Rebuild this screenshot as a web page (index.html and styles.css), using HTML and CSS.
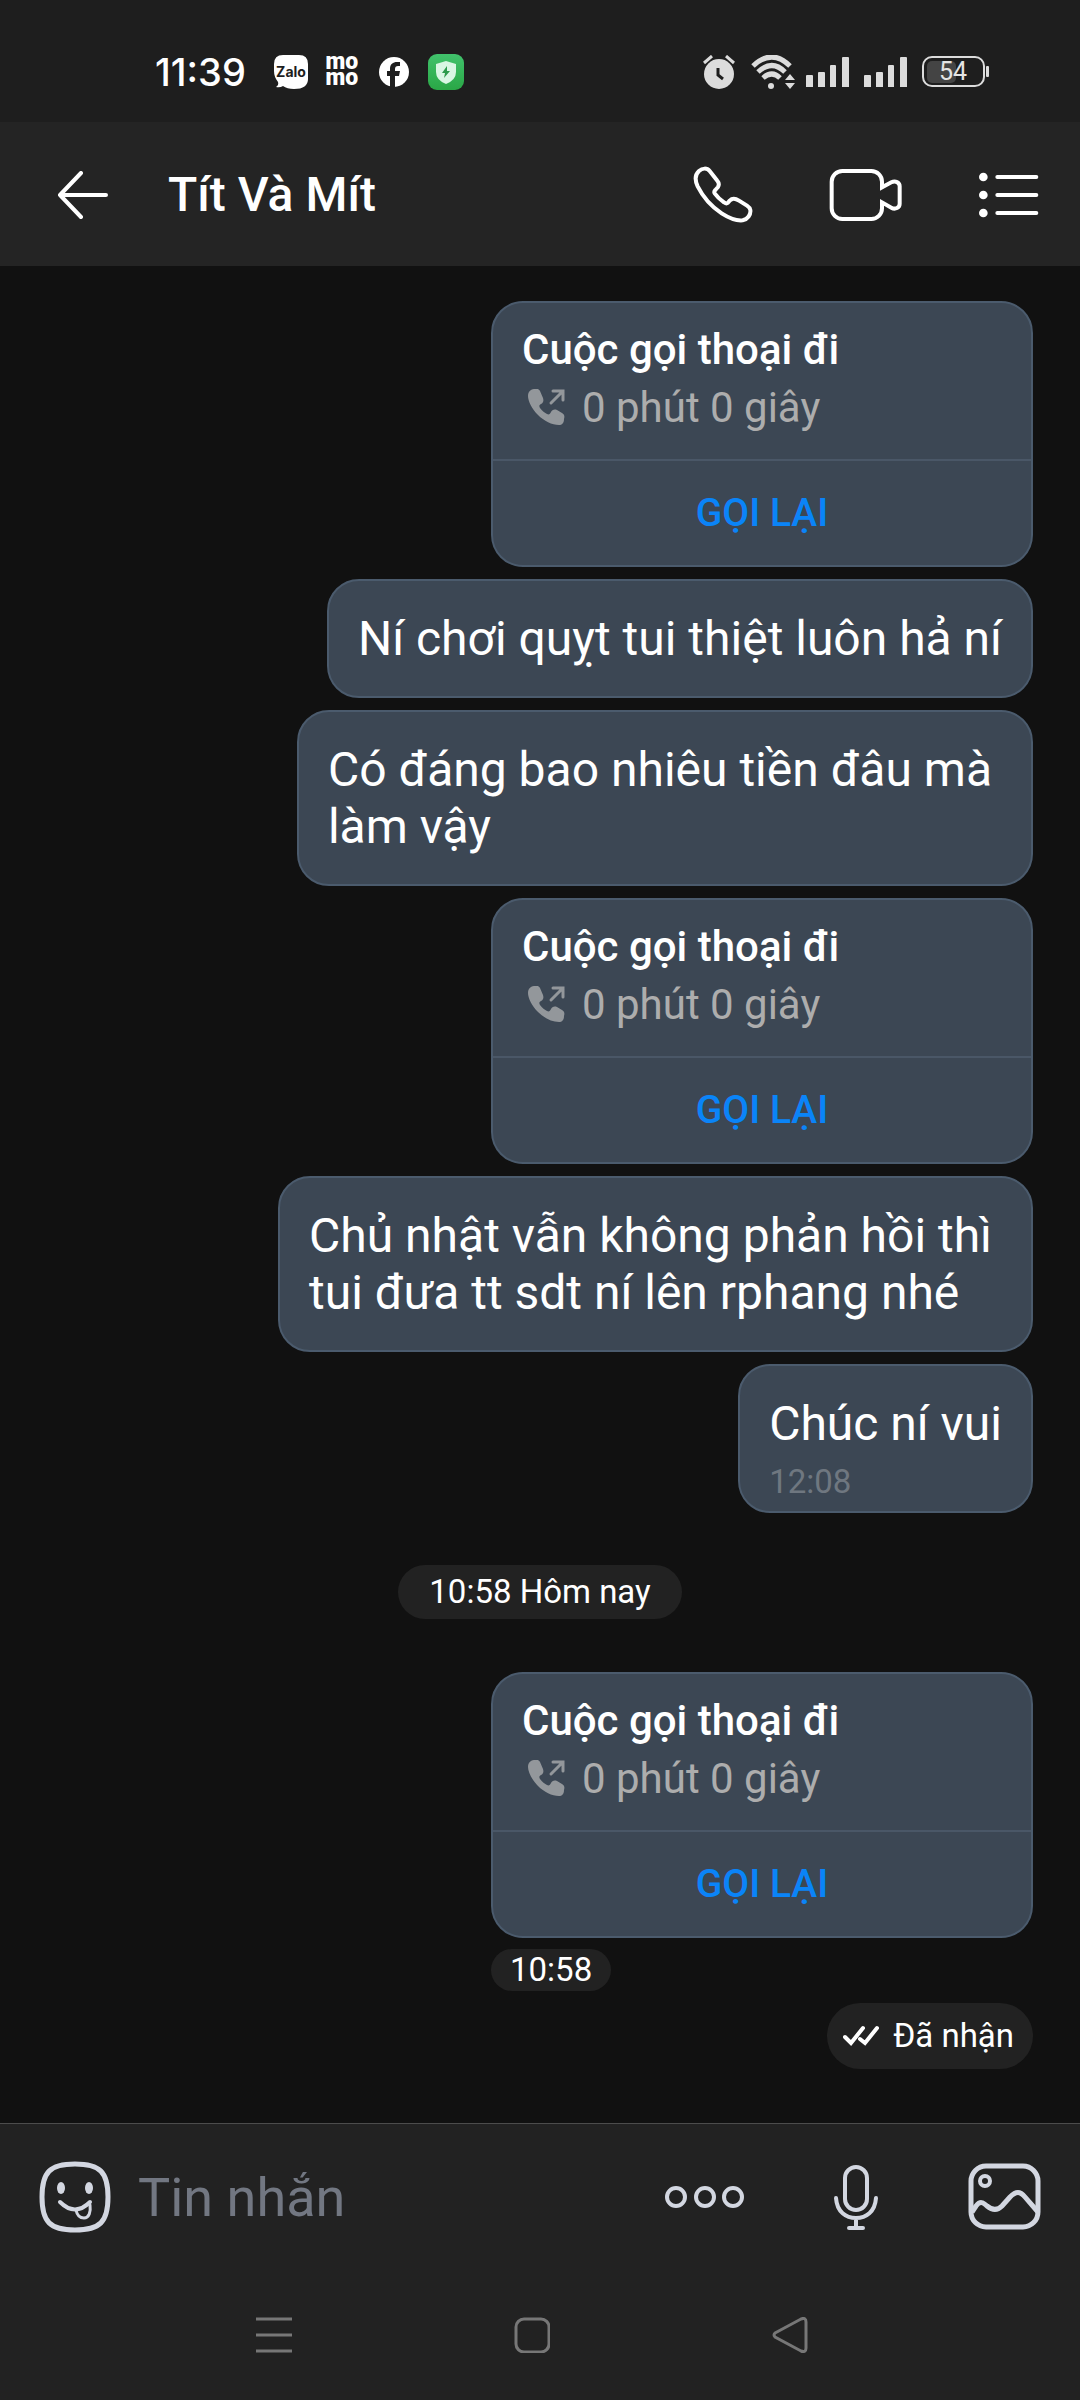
FILE: index.html
```html
<!DOCTYPE html>
<html lang="vi">
<head>
<meta charset="utf-8">
<meta name="viewport" content="width=device-width, initial-scale=1">
<title>Tít Và Mít</title>
<link rel="stylesheet" href="styles.css">
</head>
<body>
<svg class="defs" width="0" height="0" aria-hidden="true">
  <symbol id="call-out" viewBox="0 0 38 38">
    <path fill="currentColor" d="M6 0C9-.5 11 0 12 2L15 9C16 12 15 14 13 15C11 16 11 17 12 19C14 22 17 24 19 25C21 26 22 25 23 23C24 21 26 20 29 21L34 24C36 25 37 27 36 30C36 34 34 36 31 36C24 36 16 32 10 26C4 20 0 12 0 7C0 3 2 .5 6 0Z"/>
    <path fill="none" stroke="currentColor" stroke-width="3" stroke-linecap="round" d="M23 14L34 3M25 2H35V11"/>
  </symbol>
  <symbol id="signal" viewBox="0 0 44 30">
    <path fill="#dcdcdc" d="M1 18h5q1 0 1 1v11H0V19q0-1 1-1zM13 15h5q1 0 1 1v14h-7V16q0-1 1-1zM25 8h4q1 0 1 1v21h-6V9q0-1 1-1zM37 0h5q1 0 1 1v29h-7V1q0-1 1-1z"/>
  </symbol>
</svg>

<div class="status-bar">
  <div class="status-left">
    <time class="clock">11:39</time>
    <svg class="app-zalo" width="34" height="34" viewBox="0 0 34 34">
      <path fill="#fff" d="M9 0H25Q34 0 34 9V24Q34 34 20 34Q13 34 9 31Q6 33 2 32Q5 30 4 27Q0 22 0 16V9Q0 0 9 0Z"/>
      <text class="zalo-text" x="17" y="22" text-anchor="middle">Zalo</text>
    </svg>
    <div class="app-momo">mo<br>mo</div>
    <svg class="app-facebook" width="30" height="30" viewBox="0 0 30 30">
      <circle cx="15" cy="15" r="15" fill="#fff"/>
      <path fill="#1e1e1e" d="M11 30V19H8V14H11V12C11 7 14 5 18 5H21V9H19C17 9 16 10 16 12V14H21L20 19H16V30Z"/>
    </svg>
    <svg width="36" height="36" viewBox="0 0 36 36">
      <defs><linearGradient id="green" x1="0" y1="0" x2="0" y2="1"><stop offset="0" stop-color="#41c26c"/><stop offset="1" stop-color="#2aa746"/></linearGradient></defs>
      <rect width="36" height="36" rx="9" fill="url(#green)"/>
      <path fill="#d9f6e4" d="M18 7L28 10V18Q28 26 18 30Q8 26 8 18V10Z"/>
      <path fill="#2b9a4b" d="M19 12L14 19H17L16 24L22 17H19Z"/>
    </svg>
  </div>
  <div class="status-right">
    <svg class="alarm" width="32" height="34" viewBox="0 0 32 34">
      <circle cx="16" cy="19" r="15" fill="#dcdcdc"/>
      <path fill="none" stroke="#dcdcdc" stroke-width="3" d="M1 8L9 1M31 8L23 1"/>
      <path fill="none" stroke="#1e1e1e" stroke-width="3" d="M15 13V20L20 24"/>
    </svg>
    <svg class="wifi" width="45" height="35" viewBox="0 0 45 35">
      <g fill="none" stroke="#dcdcdc" stroke-width="5"><path d="M2 11Q21-7 39 11"/><path d="M7 17Q21 4 34 17"/><path d="M12 23Q21 15 29 23"/></g>
      <circle cx="20" cy="31" r="3" fill="#dcdcdc"/>
      <path fill="#dcdcdc" d="M39 19L44 25H34ZM39 34L44 28H34Z"/>
    </svg>
    <svg class="signal" width="44" height="30"><use href="#signal"/></svg>
    <svg class="signal" width="44" height="30"><use href="#signal"/></svg>
    <svg width="68" height="32" viewBox="0 0 68 32">
      <rect x="5" y="5" width="29" height="22" rx="5" fill="#444"/>
      <rect x="1" y="1" width="61" height="29" rx="9" fill="none" stroke="#dcdcdc" stroke-width="2"/>
      <rect x="64" y="10" width="3" height="11" rx="1" fill="#dcdcdc"/>
      <text class="battery-text" x="31" y="24" text-anchor="middle">54</text>
    </svg>
  </div>
</div>

<header class="header">
  <button class="icon-button" type="button" aria-label="Quay lại">
    <svg width="52" height="48" viewBox="0 0 52 48" fill="none" stroke="#fff" stroke-width="4" stroke-linecap="round" stroke-linejoin="round"><path d="M25 2L4 24L25 46M4 24H50"/></svg>
  </button>
  <h1 class="contact">Tít Và Mít</h1>
  <div class="header-actions">
    <button class="icon-button" type="button" aria-label="Gọi thoại">
      <svg width="60" height="58" viewBox="154 136 180 174" fill="none" stroke="#fff" stroke-width="12" stroke-linejoin="round"><path d="M204 151C196 141 182 142 172 151C160 162 160 180 168 197C182 225 210 258 240 278C262 292 285 301 303 299C318 296 328 282 326 268C325 262 322 259 316 255L292 240C278 231 271 233 264 240L258 247C254 250 250 247 247 245C236 237 226 228 219 218C216 213 218 211 221 208L229 199C233 192 232 186 227 180Z"/></svg>
    </button>
    <button class="icon-button" type="button" aria-label="Gọi video">
      <svg width="74" height="54" viewBox="565 141 222 162" fill="none" stroke="#fff" stroke-width="12"><path d="M724 199V182A32 32 0 0 0 692 150H605A32 32 0 0 0 573 182V262A32 32 0 0 0 605 294H692A32 32 0 0 0 724 262V244L752 260C764 267 777 260 777 248V196C777 184 764 178 752 184Z"/></svg>
    </button>
    <button class="icon-button" type="button" aria-label="Tùy chọn">
      <svg width="60" height="46" viewBox="1016 153 180 138"><g fill="#fff"><circle cx="1029" cy="168" r="13"/><circle cx="1029" cy="222" r="13"/><circle cx="1029" cy="276" r="13"/></g><path stroke="#fff" stroke-width="12" stroke-linecap="round" d="M1071 168H1188M1071 222H1188M1071 276H1188"/></svg>
    </button>
  </div>
</header>

<main class="chat">
  <article class="bubble call">
    <div class="call-info">
      <h2 class="call-title">Cuộc gọi thoại đi</h2>
      <p class="call-length"><svg class="call-icon" width="38" height="38"><use href="#call-out"/></svg>0 phút 0 giây</p>
    </div>
    <button class="call-back" type="button">GỌI LẠI</button>
  </article>
  <article class="bubble text">Ní chơi quỵt tui thiệt luôn hả ní</article>
  <article class="bubble text multiline">Có đáng bao nhiêu tiền đâu mà<br>làm vậy</article>
  <article class="bubble call">
    <div class="call-info">
      <h2 class="call-title">Cuộc gọi thoại đi</h2>
      <p class="call-length"><svg class="call-icon" width="38" height="38"><use href="#call-out"/></svg>0 phút 0 giây</p>
    </div>
    <button class="call-back" type="button">GỌI LẠI</button>
  </article>
  <article class="bubble text multiline">Chủ nhật vẫn không phản hồi thì<br>tui đưa tt sdt ní lên rphang nhé</article>
  <article class="bubble text timed">Chúc ní vui<time class="bubble-time">12:08</time></article>
  <time class="day">10:58 Hôm nay</time>
  <div class="call-group">
    <article class="bubble call">
      <div class="call-info">
        <h2 class="call-title">Cuộc gọi thoại đi</h2>
        <p class="call-length"><svg class="call-icon" width="38" height="38"><use href="#call-out"/></svg>0 phút 0 giây</p>
      </div>
      <button class="call-back" type="button">GỌI LẠI</button>
    </article>
    <time class="sent-time">10:58</time>
  </div>
  <div class="receipt">
    <svg width="38" height="22" viewBox="0 0 38 22" fill="none" stroke="#fff" stroke-width="4" stroke-linecap="round"><path d="M2 12L8 18L20 3M17 14L22 18L34 3"/></svg>
    <span>Đã nhận</span>
  </div>
</main>

<form class="composer">
  <button class="icon-button" type="button" aria-label="Nhãn dán">
    <svg width="74" height="76" viewBox="0 0 74 76" fill="none" stroke="#d3d7e1" stroke-width="5" stroke-linecap="round">
      <path d="M37 5C62 5 70 13 70 38C70 63 62 71 37 71C12 71 4 63 4 38C4 13 12 5 37 5Z"/>
      <g fill="#d3d7e1" stroke="none"><ellipse cx="23" cy="29" rx="4" ry="6"/><ellipse cx="51" cy="29" rx="4" ry="6"/></g>
      <path stroke-width="4" d="M22 43Q37 58 52 43"/><path stroke-width="3" d="M38 51C39 56 42 59 46 59C51 59 53 53 52 46"/>
    </svg>
  </button>
  <input class="message-input" type="text" placeholder="Tin nhắn" aria-label="Tin nhắn">
  <div class="composer-actions">
    <button class="icon-button" type="button" aria-label="Thêm">
      <svg width="80" height="24" viewBox="0 0 80 24" fill="none" stroke="#d3d7e1" stroke-width="4"><circle cx="11" cy="12" r="9"/><circle cx="40" cy="12" r="9"/><circle cx="68" cy="12" r="9"/></svg>
    </button>
    <button class="icon-button" type="button" aria-label="Ghi âm">
      <svg width="46" height="68" viewBox="0 0 46 68" fill="none" stroke="#d3d7e1" stroke-width="4" stroke-linecap="round"><rect x="12" y="4" width="22" height="43" rx="11"/><path d="M3 35C4 49 13 55 23 55C33 55 42 49 43 35M23 55V65M16 65H30"/></svg>
    </button>
    <button class="icon-button" type="button" aria-label="Gửi ảnh">
      <svg width="76" height="70" viewBox="0 0 76 70" fill="none" stroke="#d3d7e1" stroke-width="5"><rect x="4" y="4" width="67" height="61" rx="15"/><circle cx="18" cy="19" r="5" stroke-width="4"/><path d="M5 50L9 44C13 39 16 40 20 44C26 49 31 48 35 44L43 35C49 29 53 29 58 35L71 50"/></svg>
    </button>
  </div>
</form>

<nav class="system-nav" aria-label="Điều hướng">
  <button class="icon-button" type="button" aria-label="Gần đây"><svg width="36" height="36" viewBox="0 0 36 36" stroke="#777" stroke-width="3"><path d="M0 2H36M0 18H36M0 34H36"/></svg></button>
  <button class="icon-button" type="button" aria-label="Trang chủ"><svg width="36" height="36" viewBox="0 0 36 36" fill="none" stroke="#777" stroke-width="3"><rect x="2" y="2" width="33" height="33" rx="8"/></svg></button>
  <button class="icon-button" type="button" aria-label="Trở về"><svg width="36" height="36" viewBox="0 0 36 36" fill="none" stroke="#777" stroke-width="3"><path d="M3 16L29 2Q34 0 34 5V31Q34 36 29 34L3 20Q1 18 3 16Z"/></svg></button>
</nav>
</body>
</html>
```
FILE: styles.css
```css
* { box-sizing: border-box; }

body {
  margin: 0;
  min-height: 100vh;
  display: flex;
  flex-direction: column;
  background: #111;
  color: #fff;
  font-family: Roboto, "Noto Sans", sans-serif;
}

svg { display: block; flex: none; }
.defs { position: absolute; }
h1, h2, p { margin: 0; }
button, input { font: inherit; color: inherit; border: 0; padding: 0; background: none; }
button { cursor: pointer; }
.icon-button { display: block; flex: none; }

/* Status bar */
.status-bar {
  height: 122px;
  padding: 22px 90px 0 155px;
  display: flex;
  align-items: center;
  justify-content: space-between;
  background: #1e1e1e;
}
.status-left, .status-right { display: flex; align-items: center; }
.clock { font: 500 38px/40px Inter, sans-serif; margin-right: 28px; }
.app-zalo { margin-right: 16px; }
.zalo-text { font: 700 14px Inter, sans-serif; fill: #1e1e1e; }
.app-momo { width: 36px; margin-right: 19px; font-weight: 900; font-size: 23px; line-height: 16px; text-align: center; padding-bottom: 4px; }
.app-facebook { margin-right: 19px; }
.alarm { margin-right: 16px; }
.wifi { margin-right: 10px; }
.signal { margin-right: 14px; }
.battery-text { font: 400 25px Roboto, sans-serif; fill: #e4e4e4; }

/* Conversation header */
.header {
  height: 144px;
  padding: 2px 41px 0 56px;
  display: flex;
  align-items: center;
  background: #242424;
}
.contact { flex: 1; margin-left: 60px; font-size: 48px; line-height: 56px; font-weight: 500; }
.header-actions { display: flex; align-items: center; gap: 76px; }

/* Messages */
.chat {
  flex: 1;
  padding: 35px 47px 54px;
  display: flex;
  flex-direction: column;
  align-items: flex-end;
  gap: 12px;
}
.bubble {
  border: 2px solid #4b5b6d;
  border-radius: 32px;
  background: #3c4754;
}
.text { padding: 29px; font-size: 48px; line-height: 57px; }
.multiline { padding-right: 39px; }
.timed { padding-bottom: 9px; }
.bubble-time { display: block; margin-top: 10px; font-size: 33px; line-height: 40px; color: #6f7780; }

.call { width: 542px; max-width: 100%; overflow: hidden; }
.call-info { padding: 18px 29px 22px; border-bottom: 2px solid #4a5767; }
.call-title { font-size: 42px; line-height: 58px; font-weight: 500; }
.call-length { display: flex; align-items: center; gap: 16px; padding-left: 6px; font-size: 42px; line-height: 58px; color: #adadad; }
.call-icon { color: #93979b; }
.call-back { display: block; width: 100%; height: 104px; font-size: 39px; font-weight: 500; color: #0a84f8; }
.call-group { display: flex; flex-direction: column; align-items: flex-start; gap: 11px; }

.day, .sent-time, .receipt { font-size: 33px; background: #222; }
.day { align-self: center; margin: 40px 0 41px; padding: 7px 31px; line-height: 40px; border-radius: 27px; }
.sent-time { padding: 1px 19px; line-height: 40px; border-radius: 21px; }
.receipt { display: flex; align-items: center; gap: 12px; padding: 13px 19px 13px 16px; line-height: 40px; border-radius: 33px; }

/* Composer */
.composer {
  height: 147px;
  padding: 0 37px 0 38px;
  display: flex;
  align-items: center;
  gap: 26px;
  border-top: 1px solid #4c4c4c;
  background: #222;
}
.message-input { flex: 1; min-width: 0; padding-top: 2px; font-size: 54px; line-height: 64px; outline: 0; }
.message-input::placeholder { color: #727782; opacity: 1; }
.composer-actions { display: flex; align-items: center; gap: 88px; }

/* System navigation */
.system-nav {
  height: 130px;
  padding-right: 17px;
  display: flex;
  align-items: center;
  justify-content: center;
  gap: 222px;
  background: #222;
}
```
